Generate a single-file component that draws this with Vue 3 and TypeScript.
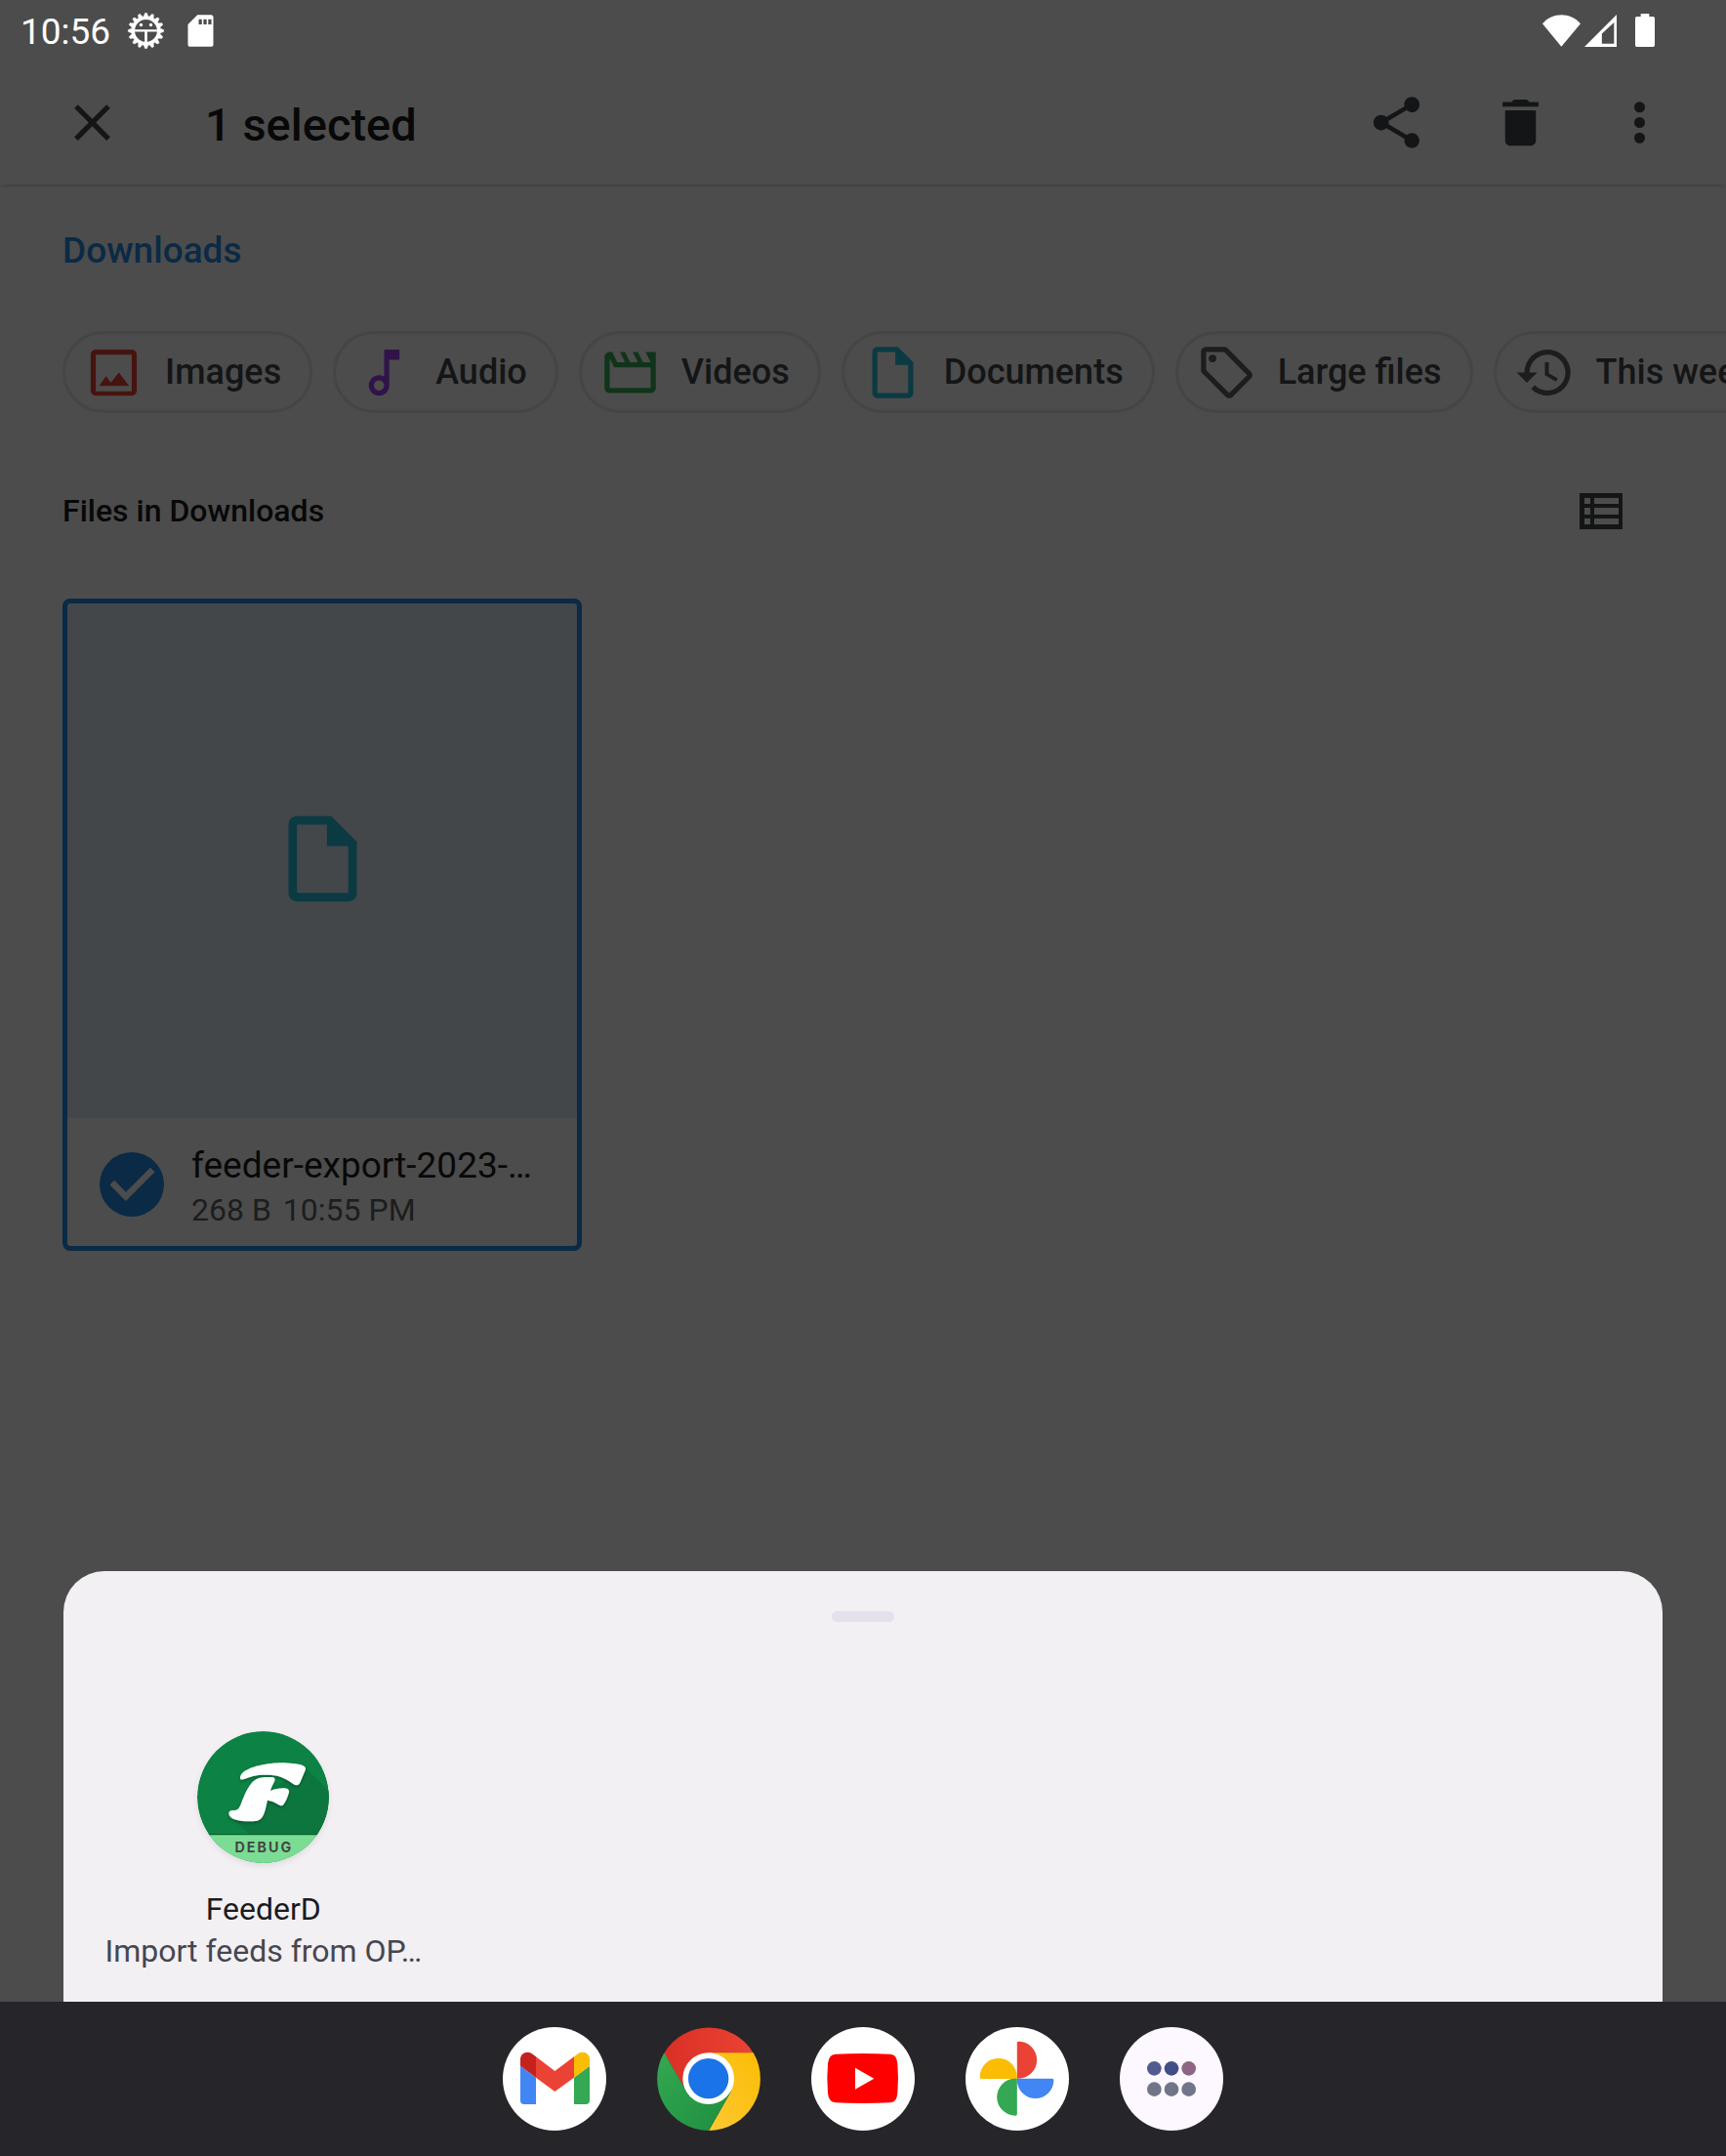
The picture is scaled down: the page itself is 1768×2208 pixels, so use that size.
<script setup lang="ts">
import { ref } from 'vue'

interface Chip {
  label: string
  color: string
  path: string
}

const chips: Chip[] = [
  {
    label: 'Images',
    color: '#461410',
    path: 'M19 3H5c-1.1 0-2 .9-2 2v14c0 1.1.9 2 2 2h14c1.1 0 2-.9 2-2V5c0-1.1-.9-2-2-2zM5 19.3V5h14v14.3zM6.3 17.2 9 13.4l1.9 2.5L14 12l4 5.2z',
  },
  {
    label: 'Audio',
    color: '#301449',
    path: 'M12 3v10.55c-.59-.34-1.27-.55-2-.55-2.21 0-4 1.79-4 4s1.79 4 4 4 4-1.79 4-4V7h4V3zM10 19a2 2 0 1 1 0-4 2 2 0 0 1 0 4z',
  },
  {
    label: 'Videos',
    color: '#10341a',
    path: 'M18 4l2 4h-3l-2-4h-2l2 4h-3l-2-4H8l2 4H7L5 4H4c-1.1 0-2 .9-2 2v12c0 1.1.9 2 2 2h16c1.1 0 2-.9 2-2V4zM4 6.47 5.76 10H20v8H4z',
  },
  {
    label: 'Documents',
    color: '#0b3a43',
    path: 'M14 2H6C4.9 2 4 2.9 4 4v16c0 1.1.9 2 2 2h12c1.1 0 2-.9 2-2V8zM6 20V4h7v5h5v11z',
  },
  {
    label: 'Large files',
    color: '#1c1d1e',
    path: 'M21.41 11.58l-9-9C12.05 2.22 11.55 2 11 2H4c-1.1 0-2 .9-2 2v7c0 .55.22 1.05.59 1.42l9 9c.36.36.86.58 1.41.58s1.05-.22 1.41-.59l7-7c.37-.36.59-.86.59-1.41s-.23-1.06-.59-1.42zM13 20.01 4 11V4h7l9 9zM8 6.5a1.5 1.5 0 1 1-3 0 1.5 1.5 0 0 1 3 0z',
  },
  {
    label: 'This week',
    color: '#1c1d1e',
    path: 'M13 3a9 9 0 0 0-9 9H1l3.89 3.89.07.14L9 12H6c0-3.87 3.13-7 7-7s7 3.13 7 7-3.13 7-7 7c-1.93 0-3.68-.79-4.94-2.06l-1.42 1.42C8.27 19.99 10.51 21 13 21a9 9 0 0 0 0-18zm-1 5v5l4.28 2.54.72-1.21-3.5-2.08V8z',
  },
]

const docPath = chips[3].path
const selected = ref<boolean>(true)

// Outline of the toothed ring in the status bar
const teeth = 16
const gearPoints: string = Array.from({ length: teeth * 4 }, (_, i) => {
  const radius = i % 4 < 2 ? 54 : 44
  const angle = ((i - 0.5) / (teeth * 4)) * Math.PI * 2 - Math.PI / 2
  return `${(58 + radius * Math.cos(angle)).toFixed(1)},${(58 + radius * Math.sin(angle)).toFixed(1)}`
}).join(' ')
</script>

<template>
  <div class="screen">
    <div class="status">
      <time class="clock">10:56</time>
      <svg class="status-icon" viewBox="0 0 116 116" aria-hidden="true">
        <polygon :points="gearPoints" fill="#fff" stroke="#fff" stroke-width="2" stroke-linejoin="round" />
        <circle cx="58" cy="58" r="34" fill="#4c4c4c" />
        <path d="M24 54h68v7H62v34h-8V61H24z" fill="#fff" />
        <circle cx="43" cy="40" r="5" fill="#fff" />
        <circle cx="73" cy="40" r="5" fill="#fff" />
      </svg>
      <svg class="status-icon" viewBox="0 0 24 24" aria-hidden="true">
        <path fill="#fff" d="M18.600 2H10L4 8v12.700c0 .8.600 1.300 1.300 1.300h13.400c.7 0 1.300-.5 1.300-1.300V3.300C20 2.600 19.400 2 18.600 2zM12.800 8h-2V4.800h2zm3 0h-2V4.800h2zm3 0h-2V4.800h2z" />
      </svg>
      <div class="signals">
        <svg width="39" height="33" viewBox="0 0 117 98" aria-hidden="true"><path fill="#fff" d="M0 27C30-9 86-9 117 27L58 98z" /></svg>
        <svg width="33" height="33" viewBox="0 0 98 98" aria-hidden="true"><path fill="#fff" fill-rule="evenodd" d="M0 98 98 0v98zM53 58v30h37V24z" /></svg>
        <svg class="battery" width="20" height="34" viewBox="0 0 60 102" aria-hidden="true"><path fill="#fff" d="M17 0h26v9h12q5 0 5 5v83q0 5-5 5H5q-5 0-5-5V14q0-5 5-5h12z" /></svg>
      </div>
    </div>

    <header class="appbar">
      <button class="tool" type="button" aria-label="Close">
        <svg viewBox="0 0 24 24"><path d="M19 6.410 17.590 5 12 10.590 6.410 5 5 6.410 10.590 12 5 17.590 6.410 19 12 13.410 17.590 19 19 17.590 13.410 12z" /></svg>
      </button>
      <h1>1 selected</h1>
      <div class="actions">
        <button class="tool" type="button" aria-label="Share">
          <svg viewBox="0 0 24 24"><path d="M18 16.080c-.76 0-1.440.3-1.960.77L8.910 12.700c.05-.23.09-.46.09-.7s-.04-.47-.09-.7l7.050-4.110c.54.5 1.250.81 2.040.81 1.660 0 3-1.340 3-3s-1.340-3-3-3-3 1.340-3 3c0 .24.04.47.09.7L8.040 9.810C7.500 9.310 6.790 9 6 9c-1.660 0-3 1.340-3 3s1.340 3 3 3c.79 0 1.500-.31 2.040-.81l7.120 4.160c-.05.21-.08.43-.08.65 0 1.610 1.310 2.920 2.920 2.920s2.920-1.310 2.920-2.920-1.310-2.920-2.920-2.920z" /></svg>
        </button>
        <button class="tool" type="button" aria-label="Delete">
          <svg viewBox="0 0 24 24"><path d="M6 19c0 1.100.9 2 2 2h8c1.100 0 2-.9 2-2V7.200H6zM19 4h-3.500l-1-1h-5l-1 1H5v1.800h14z" /></svg>
        </button>
        <button class="tool narrow" type="button" aria-label="More options">
          <svg viewBox="2 0 20 24"><circle cx="12" cy="6" r="2.100" /><circle cx="12" cy="12" r="2.100" /><circle cx="12" cy="18" r="2.100" /></svg>
        </button>
      </div>
    </header>

    <main>
      <nav><a class="crumb" href="#downloads">Downloads</a></nav>

      <div class="chips">
        <button v-for="chip in chips" :key="chip.label" class="chip" type="button">
          <svg viewBox="0 0 24 24" aria-hidden="true"><path :fill="chip.color" fill-rule="evenodd" :d="chip.path" /></svg>
          <span>{{ chip.label }}</span>
        </button>
      </div>

      <div class="section">
        <h2>Files in Downloads</h2>
        <button class="view" type="button" aria-label="List view">
          <svg width="44" height="37" viewBox="0 0 44 37"><path fill-rule="evenodd" d="M0 0h44v37H0zM5 5v6h6V5zM15 5v6h25V5zM5 15v7h6v-7zM15 15v7h25v-7zM5 26v6h6v-6zM15 26v6h25v-6z" /></svg>
        </button>
      </div>

      <article class="card">
        <div class="thumb">
          <svg viewBox="0 0 24 24" aria-hidden="true"><path fill="#0b3a43" fill-rule="evenodd" :d="docPath" /></svg>
        </div>
        <div class="info">
          <span class="tick">
            <input id="file-1" v-model="selected" type="checkbox" />
            <svg v-if="selected" viewBox="0 0 24 24" aria-hidden="true"><path fill="#4c4c4c" d="M10 17l-5-5 1.410-1.410L10 14.170l7.590-7.590L19 8z" /></svg>
          </span>
          <div class="details">
            <label for="file-1" class="name">feeder-export-2023-…</label>
            <p class="meta"><span>268 B</span><span>10:55 PM</span></p>
          </div>
        </div>
      </article>
    </main>

    <section class="sheet" aria-label="Open with">
      <div class="handle"></div>
      <div class="targets">
        <button class="target" type="button">
          <svg class="target-icon" viewBox="36 38 405 405" aria-hidden="true">
            <defs>
              <clipPath id="disc"><circle cx="238.500" cy="240.500" r="202.500" /></clipPath>
              <filter id="soft" x="-20%" y="-20%" width="140%" height="140%">
                <feDropShadow dx="0" dy="5" stdDeviation="5" flood-color="#000" flood-opacity=".3" />
              </filter>
            </defs>
            <g clip-path="url(#disc)">
              <path fill="#0c8244" d="M36 38h405v405H36z" />
              <path fill="#0c763e" d="M367 148 441 222v134H197l-58-55z" />
              <g fill="#fff" filter="url(#soft)">
                <path d="M168 181C168 150 250 135 295 135C320 135 345 138 358 142C368 145 371 150 368 158L353 194C349 204 341 207 331 200C300 178 285 172 245 172C215 172 200 178 178 186C172 188 168 186 168 181Z" />
                <path d="M205 195C220 178 240 178 266 179C275 180 277 186 273 193C267 205 263 212 261 221C275 213 300 211 312 214C318 216 320 222 317 230C313 243 308 254 302 262C298 268 292 268 286 264C275 256 264 252 252 250C247 272 244 290 236 302C228 314 215 315 195 315C165 315 145 310 136 299C130 290 134 282 144 281C160 281 163 278 170 262C183 230 190 212 205 195Z" />
              </g>
              <path fill="#7bdc94" d="M36 356h405v87H36z" />
              <path fill="#07602f" d="M36 353h405v4H36z" />
              <text class="ribbon" x="241" y="410" text-anchor="middle">DEBUG</text>
            </g>
          </svg>
          <span class="target-name">FeederD</span>
          <span class="target-note">Import feeds from OP…</span>
        </button>
      </div>
    </section>

    <footer class="dock">
      <button type="button" aria-label="Gmail">
        <svg viewBox="45 108 318 318">
          <circle cx="204" cy="267" r="159" fill="#fff" />
          <path fill="#4285f4" d="M99 227l48 36v82h-36q-12 0-12-12z" />
          <path fill="#34a853" d="M264 263l48-36v106q0 12-12 12h-36z" />
          <path fill="#ea4335" d="M147 199l58 44 59-44v64l-59 43-58-43z" />
          <path fill="#c5221f" d="M99 227v-20C99 188 120 178 137 191l10 8v64z" />
          <path fill="#fbbc04" d="M264 199l10-8C291 178 312 188 312 207v20l-48 36z" />
        </svg>
      </button>
      <button type="button" aria-label="Chrome">
        <svg viewBox="519 108 318 318">
          <defs>
            <linearGradient id="cr"><stop offset="0" stop-color="#d93025" /><stop offset="1" stop-color="#ea4335" /></linearGradient>
            <linearGradient id="cy" x1="1" y1="0" x2="0" y2="1"><stop offset="0" stop-color="#fbbc04" /><stop offset="1" stop-color="#fcc934" /></linearGradient>
            <linearGradient id="cg" x1="0" y1="0" x2="1" y2="1"><stop offset="0" stop-color="#34a853" /><stop offset="1" stop-color="#1e8e3e" /></linearGradient>
          </defs>
          <path fill="url(#cr)" d="M541 188A159 159 0 0 1 815 188H678v79l-68 39z" />
          <path fill="url(#cy)" d="M815 187H678v80l68 39-68 120A159 159 0 0 0 815 187z" />
          <path fill="url(#cg)" d="M541 187l69 119 68-39 68 39-68 120A159 159 0 0 1 541 187z" />
          <circle cx="677" cy="266" r="79" fill="#fff" />
          <circle cx="677" cy="266" r="62" fill="#1a73e8" />
        </svg>
      </button>
      <button type="button" aria-label="YouTube">
        <svg viewBox="993 108 318 318">
          <circle cx="1152" cy="267" r="159" fill="#fff" />
          <path fill="red" d="M1067 191Q1151 187 1236 191Q1256 192 1258 220Q1262 265 1258 312Q1256 338 1236 340Q1151 344 1067 340Q1047 338 1044 312Q1040 265 1044 220Q1047 192 1067 191Z" />
          <path fill="#fff" d="M1128 233l58 33-58 33z" />
        </svg>
      </button>
      <button type="button" aria-label="Photos">
        <svg viewBox="147 108 318 318">
          <circle cx="306" cy="267" r="159" fill="#fff" />
          <path fill="#ea4335" d="M305.500 266V156q0-4 4-4a57 57 0 0 1 0 114z" />
          <path fill="#fbbc04" d="M305.500 267H195q-4 0-4-6a57 57 0 0 1 114.500 0z" />
          <path fill="#34a853" d="M305.500 266v110q0 4-5 4a57 57 0 0 1 0-114z" />
          <path fill="#4285f4" d="M305.500 266H414q4 0 4 5a56 56 0 0 1-112.500 0z" />
        </svg>
      </button>
      <button type="button" aria-label="All apps">
        <svg viewBox="621 108 318 318">
          <circle cx="780" cy="267" r="159" fill="#fdf8ff" />
          <circle cx="727" cy="235" r="22" fill="#515b92" />
          <circle cx="780" cy="235" r="22" fill="#444e86" />
          <circle cx="833" cy="235" r="22" fill="#8c6684" />
          <g fill="#70758a">
            <circle cx="727" cy="299" r="22" /><circle cx="780" cy="299" r="22" /><circle cx="833" cy="299" r="22" />
          </g>
        </svg>
      </button>
    </footer>
  </div>
</template>

<style>
body {
  margin: 0;
  background: #4c4c4c;
}
</style>

<style scoped>
.screen {
  display: flex;
  flex-direction: column;
  min-height: 100vh;
  overflow: hidden;
  background: #4c4c4c;
  color: #080808;
  font-family: Roboto, "Noto Sans", sans-serif;
}

button {
  margin: 0;
  padding: 0;
  border: 0;
  background: none;
  font: inherit;
  color: inherit;
  cursor: pointer;
}

svg {
  display: block;
  flex: none;
}

h1,
h2,
p {
  margin: 0;
  font-weight: 500;
}

.status {
  display: flex;
  align-items: center;
  gap: 17px;
  height: 62px;
  padding: 0 73px 0 21px;
  box-sizing: border-box;
  color: #fff;
}

.clock {
  font-size: 37px;
  line-height: 44px;
  padding-top: 4px;
}

.status-icon {
  width: 39px;
  height: 39px;
}

.signals {
  display: flex;
  align-items: center;
  gap: 4px;
  margin-left: auto;
}

.battery {
  margin-left: 15px;
}

.appbar {
  display: flex;
  align-items: center;
  height: 127px;
  padding: 0 62px 0 63px;
  box-shadow: 0 3px 3px -2px #3c3c3c;
}

.tool svg {
  width: 63px;
  height: 63px;
  fill: #141516;
}

.tool.narrow svg {
  width: 53px;
}

h1 {
  margin-left: 84px;
  padding-top: 5px;
  font-size: 47px;
  line-height: 56px;
}

.actions {
  display: flex;
  gap: 64px;
  margin-left: auto;
}

main {
  flex: 1;
  padding: 46px 64px 64px;
}

nav {
  display: flex;
}

.crumb {
  color: #0a2a46;
  font-size: 37px;
  font-weight: 500;
  line-height: 44px;
  text-decoration: none;
}

.chips {
  display: flex;
  gap: 21px;
  margin: 60px -64px 0 0;
  overflow: hidden;
}

.chip {
  display: flex;
  flex: none;
  align-items: center;
  gap: 21px;
  height: 84px;
  padding: 0 29px 0 18px;
  box-sizing: border-box;
  border: 3px solid #454545;
  border-radius: 42px;
  color: #141516;
  font-size: 36px;
  font-weight: 500;
  line-height: 44px;
  white-space: nowrap;
}

.chip svg {
  width: 63px;
  height: 63px;
}

.section {
  display: flex;
  align-items: center;
  justify-content: space-between;
  height: 44px;
  margin: 78px 42px 68px 0;
}

h2 {
  font-size: 32px;
  line-height: 44px;
}

.view svg {
  fill: #141516;
}

.card {
  width: 532px;
  max-width: 100%;
  overflow: hidden;
  outline: 5px solid #0a2a46;
  outline-offset: -5px;
  border-radius: 8px;
}

.thumb {
  display: flex;
  align-items: center;
  justify-content: center;
  aspect-ratio: 1;
  background: #43474a;
}

.thumb svg {
  width: 105px;
  height: 105px;
}

.info {
  display: flex;
  align-items: center;
  gap: 28px;
  height: 136px;
  padding: 0 38px;
}

.tick {
  display: grid;
  flex: none;
  place-items: center;
}

.tick input,
.tick svg {
  grid-area: 1 / 1;
  width: 66px;
  height: 66px;
  margin: 0;
}

.tick input {
  appearance: none;
  border-radius: 50%;
}

.tick input:checked {
  background: #0a2a46;
}

.tick svg {
  width: 79px;
  height: 79px;
  margin: 0 -7px;
  pointer-events: none;
}

.details {
  min-width: 0;
  padding-top: 5px;
}

.name {
  display: block;
  overflow: hidden;
  font-size: 37px;
  line-height: 46px;
  text-overflow: ellipsis;
  white-space: nowrap;
}

.meta {
  display: flex;
  gap: 12px;
  color: #1c1d1e;
  font-size: 32px;
  font-weight: 400;
  line-height: 44px;
}

.sheet {
  margin: 0 65px;
  padding: 41px 0 30px;
  border-radius: 42px 42px 0 0;
  background: #f2f0f3;
}

.handle {
  width: 64px;
  height: 11px;
  margin: 0 auto 112px;
  border-radius: 6px;
  background: #e3e1ec;
}

.targets {
  display: grid;
  grid-template-columns: repeat(4, 1fr);
}

.target {
  display: flex;
  flex-direction: column;
  align-items: center;
  min-width: 0;
  color: #1b1b1f;
  font-size: 32px;
  line-height: 43px;
  white-space: nowrap;
}

.target-icon {
  width: 135px;
  height: 135px;
  margin-bottom: 26px;
  border-radius: 50%;
  box-shadow: 0 3px 6px #00000014;
}

.ribbon {
  fill: #444746;
  font-family: Inter, sans-serif;
  font-size: 43px;
  font-weight: 700;
  letter-spacing: 6px;
}

.target-note {
  color: #46464f;
}

.dock {
  display: flex;
  align-items: center;
  justify-content: center;
  gap: 52px;
  height: 158px;
  background: #26252a;
}

.dock svg {
  width: 106px;
  height: 106px;
}
</style>
